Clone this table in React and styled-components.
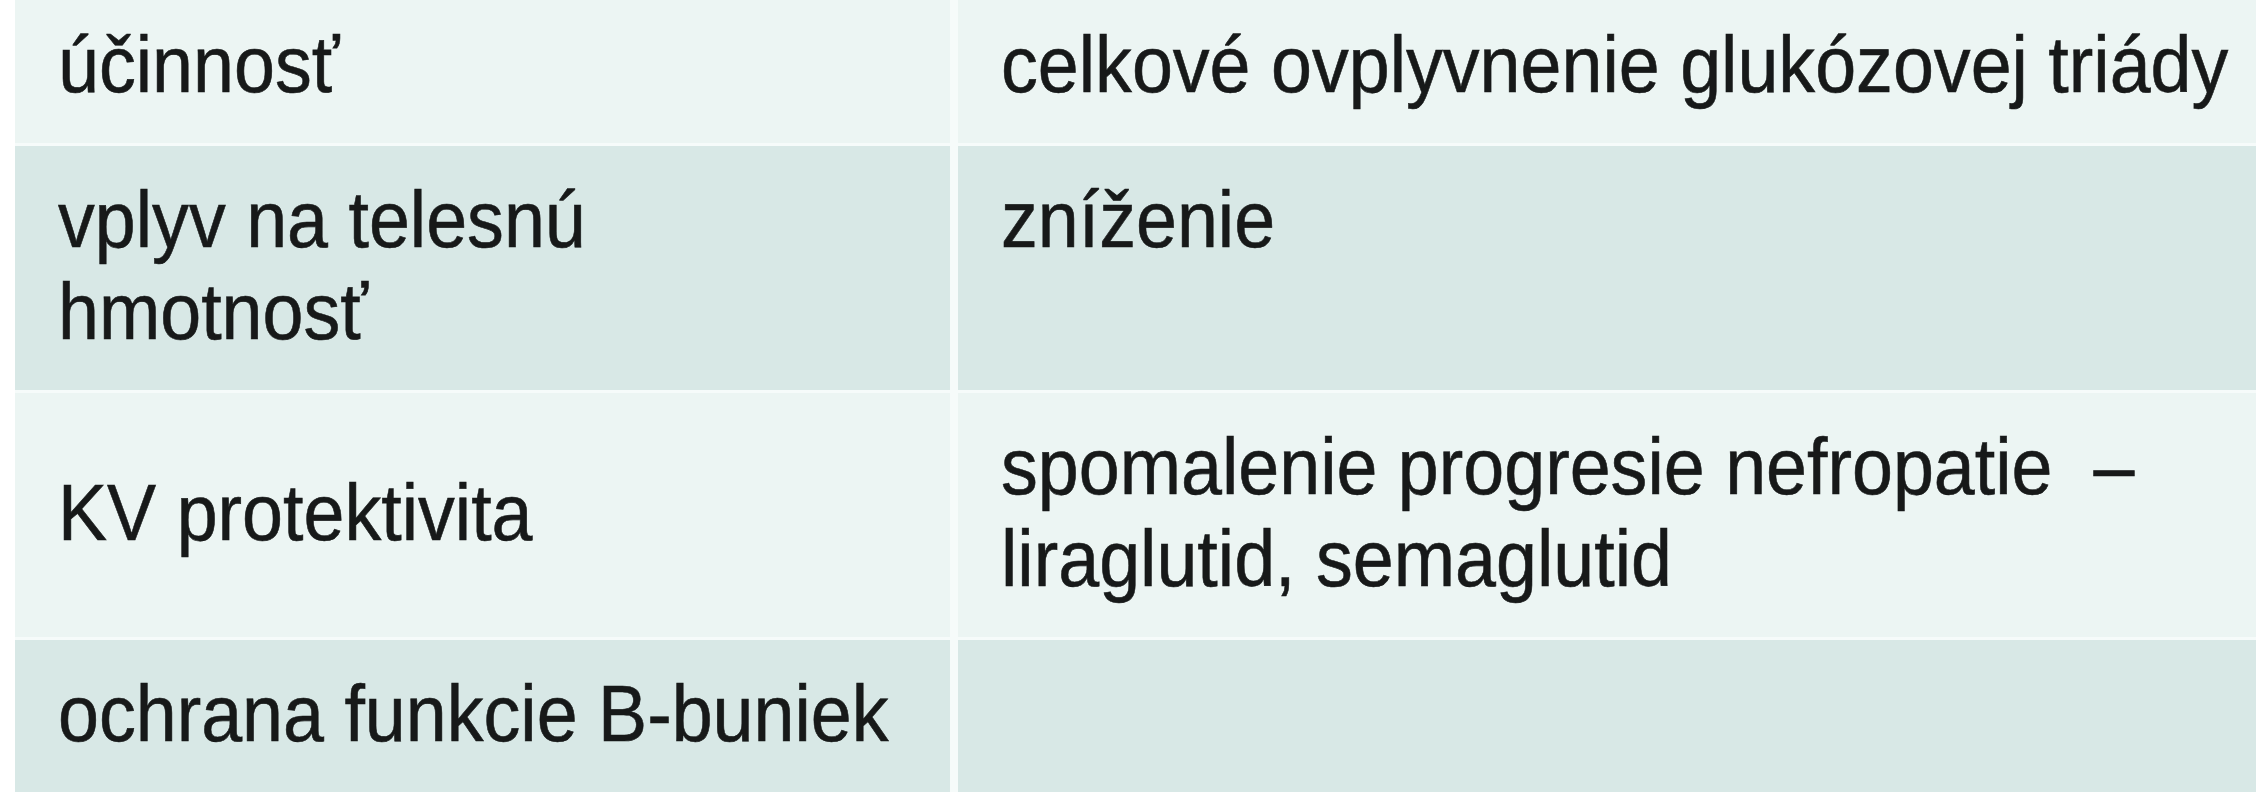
import React from 'react';
import styled, { createGlobalStyle } from 'styled-components';

const Global = createGlobalStyle`
  html, body {
    margin: 0;
    padding: 0;
    background: #ffffff;
    overflow: hidden;
  }
`;

const Page = styled.div`
  width: 2256px;
  height: 800px;
  overflow: hidden;
  background: #ffffff;
`;

const Table = styled.div`
  display: grid;
  grid-template-columns: 935px 1fr;
  column-gap: 8px;
  row-gap: 3px;
  margin: -9px 0 0 15px;
  background: #f6fbfa;
  font-family: "Liberation Sans", Arial, sans-serif;
  font-size: 80px;
  line-height: 92px;
  color: #171919;
  -webkit-text-stroke: 0.6px #171919;
`;

const Cell = styled.div`
  background: ${(p) => (p.$tone === 'dark' ? '#d8e8e6' : '#ecf5f3')};
  padding: 28px 20px 32px 43px;
  min-height: 92px;
  display: flex;
  flex-direction: column;
  justify-content: ${(p) => (p.$center ? 'center' : 'flex-start')};
  white-space: nowrap;
`;

/* the reference face is a condensed humanist sans: narrow the glyphs */
const Line = styled.span`
  display: block;
  transform: scaleX(0.92);
  transform-origin: left center;
`;

const rows = [
  { label: ['účinnosť'], value: ['celkové ovplyvnenie glukózovej triády'] },
  { label: ['vplyv na telesnú', 'hmotnosť'], value: ['zníženie'] },
  {
    label: ['KV protektivita'],
    value: ['spomalenie progresie nefropatie\u00a0 –', 'liraglutid, semaglutid'],
  },
  { label: ['ochrana funkcie B-buniek'], value: [] },
];

export default function App() {
  return (
    <Page>
      <Global />
      <Table>
        {rows.map((r, i) => {
          const tone = i % 2 === 0 ? 'light' : 'dark';
          return (
            <React.Fragment key={i}>
              <Cell $tone={tone} $center>
                {r.label.map((t, j) => (
                  <Line key={j}>{t}</Line>
                ))}
              </Cell>
              <Cell $tone={tone}>
                {r.value.map((t, j) => (
                  <Line key={j}>{t}</Line>
                ))}
              </Cell>
            </React.Fragment>
          );
        })}
      </Table>
    </Page>
  );
}
